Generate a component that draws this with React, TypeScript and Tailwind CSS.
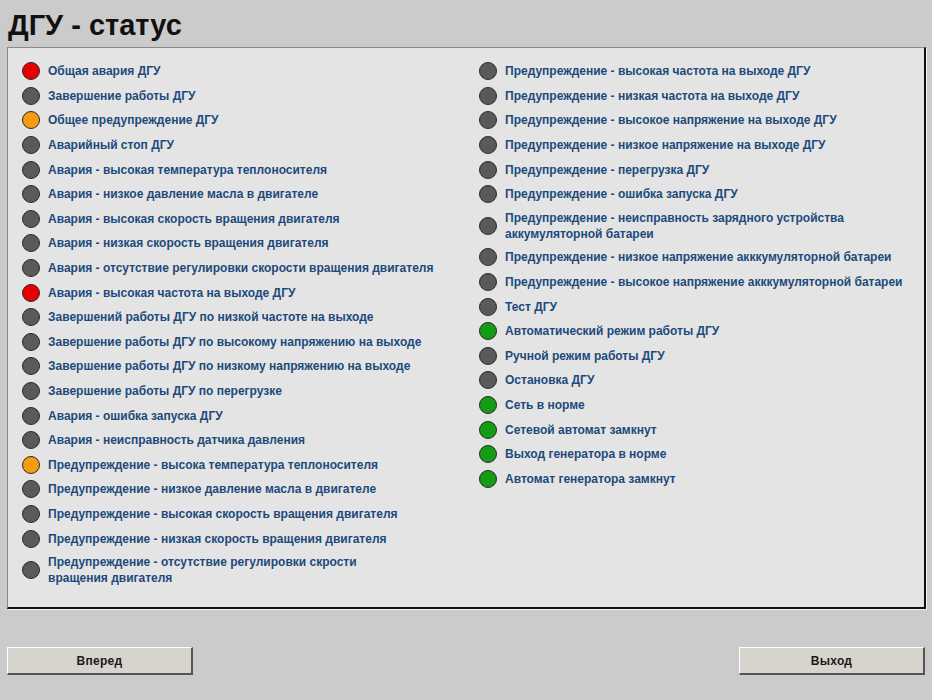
type Lamp = "red" | "gray" | "orange" | "green";

const lampClass: Record<Lamp, string> = {
  red: "bg-[#e80000]",
  gray: "bg-[#5a5a5a]",
  orange: "bg-[#f69c12]",
  green: "bg-[#159c15]",
};

const left: [Lamp, string][] = [
  ["red", "Общая авария ДГУ"],
  ["gray", "Завершение работы ДГУ"],
  ["orange", "Общее предупреждение ДГУ"],
  ["gray", "Аварийный стоп ДГУ"],
  ["gray", "Авария - высокая температура теплоносителя"],
  ["gray", "Авария - низкое давление масла в двигателе"],
  ["gray", "Авария - высокая скорость вращения двигателя"],
  ["gray", "Авария - низкая скорость вращения двигателя"],
  ["gray", "Авария - отсутствие регулировки скорости вращения двигателя"],
  ["red", "Авария - высокая частота на выходе ДГУ"],
  ["gray", "Завершений работы ДГУ по низкой частоте на выходе"],
  ["gray", "Завершение работы ДГУ по высокому напряжению на выходе"],
  ["gray", "Завершение работы ДГУ по низкому напряжению на выходе"],
  ["gray", "Завершение работы ДГУ по перегрузке"],
  ["gray", "Авария - ошибка запуска ДГУ"],
  ["gray", "Авария - неисправность датчика давления"],
  ["orange", "Предупреждение - высока температура теплоносителя"],
  ["gray", "Предупреждение - низкое давление масла в двигателе"],
  ["gray", "Предупреждение - высокая скорость вращения двигателя"],
  ["gray", "Предупреждение - низкая скорость вращения двигателя"],
  ["gray", "Предупреждение - отсутствие регулировки скрости\nвращения двигателя"],
];

const right: [Lamp, string][] = [
  ["gray", "Предупреждение - высокая частота на выходе ДГУ"],
  ["gray", "Предупреждение - низкая частота на выходе ДГУ"],
  ["gray", "Предупреждение - высокое напряжение на выходе ДГУ"],
  ["gray", "Предупреждение - низкое напряжение на выходе ДГУ"],
  ["gray", "Предупреждение - перегрузка ДГУ"],
  ["gray", "Предупреждение - ошибка запуска ДГУ"],
  ["gray", "Предупреждение - неисправность зарядного устройства\nаккумуляторной батареи"],
  ["gray", "Предупреждение - низкое напряжение акккумуляторной батареи"],
  ["gray", "Предупреждение - высокое напряжение акккумуляторной батареи"],
  ["gray", "Тест ДГУ"],
  ["green", "Автоматический режим работы ДГУ"],
  ["gray", "Ручной режим работы ДГУ"],
  ["gray", "Остановка ДГУ"],
  ["green", "Сеть в норме"],
  ["green", "Сетевой автомат замкнут"],
  ["green", "Выход генератора в норме"],
  ["green", "Автомат генератора замкнут"],
];

function StatusRow({ lamp, label }: { lamp: Lamp; label: string }) {
  return (
    <div className="flex items-center gap-2 py-[3.3px]">
      <span
        className={`h-[18px] w-[18px] shrink-0 rounded-full border border-[#2a2a2a] ${lampClass[lamp]}`}
      />
      <span className="whitespace-pre-line text-[12px] font-bold leading-[16px] text-[#1d4a7c]">
        {label}
      </span>
    </div>
  );
}

function PanelButton({ children }: { children: React.ReactNode }) {
  return (
    <button className="h-[28px] w-[186px] border-t border-l border-t-white border-l-white border-b-2 border-r-2 border-b-[#555] border-r-[#555] bg-[#d7d4cd] text-[12px] font-bold tracking-[0.3px] text-[#1a1a1a]">
      {children}
    </button>
  );
}

export default function App() {
  return (
    <div className="flex h-[700px] w-[932px] flex-col bg-[#cbcbcb] font-['Liberation_Sans',Arial,sans-serif]">
      <h1 className="pl-[8px] pt-[8px] text-[29px] font-bold leading-[34px] text-[#111]">
        ДГУ - статус
      </h1>

      <div className="ml-[7px] mt-[5px] h-[562px] w-[919px] border-t border-l border-t-[#8a8a8a] border-l-[#8a8a8a] border-b-2 border-r-2 border-b-[#111] border-r-[#111] bg-[#e4e4e4] pl-[14px] pt-[11px] shadow-[1px_1px_0_#f4f4f4]">
        <div className="grid grid-cols-[457px_1fr]">
          <div className="flex flex-col">
            {left.map(([lamp, label], i) => (
              <StatusRow key={i} lamp={lamp} label={label} />
            ))}
          </div>
          <div className="flex flex-col">
            {right.map(([lamp, label], i) => (
              <StatusRow key={i} lamp={lamp} label={label} />
            ))}
          </div>
        </div>
      </div>

      <div className="mt-[38px] flex justify-between px-[7px]">
        <PanelButton>Вперед</PanelButton>
        <PanelButton>Выход</PanelButton>
      </div>
    </div>
  );
}
